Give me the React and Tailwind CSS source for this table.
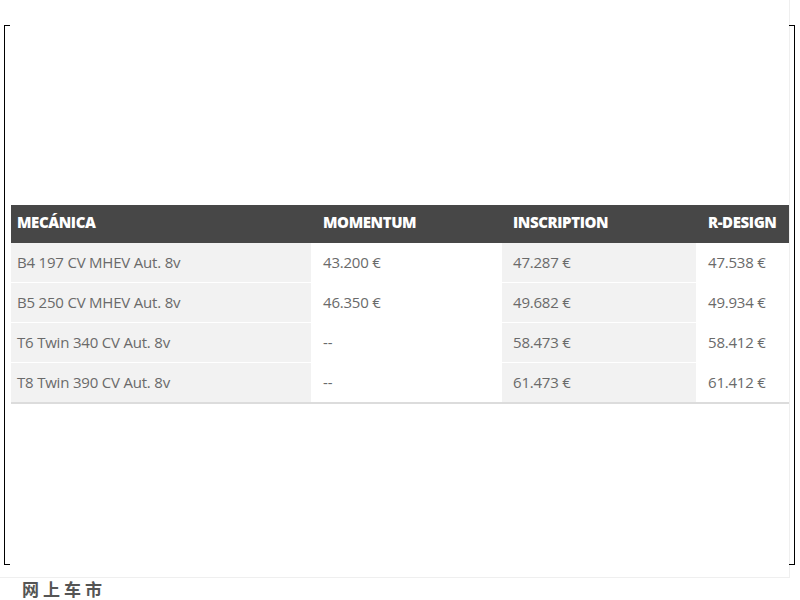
import React from 'react'

const rows = [
  ['B4 197 CV MHEV Aut. 8v', '43.200 €', '47.287 €', '47.538 €'],
  ['B5 250 CV MHEV Aut. 8v', '46.350 €', '49.682 €', '49.934 €'],
  ['T6 Twin 340 CV Aut. 8v', '--', '58.473 €', '58.412 €'],
  ['T8 Twin 390 CV Aut. 8v', '--', '61.473 €', '61.412 €'],
]

const heads = ['MECÁNICA', 'MOMENTUM', 'INSCRIPTION', 'R-DESIGN']
const pads = ['pl-[6px]', 'pl-[11px]', 'pl-[11px]', 'pl-[11px]']
const bgs = ['bg-[#f2f2f2]', 'bg-white', 'bg-[#f2f2f2]', 'bg-white']

function Bracket({ side }) {
  const left = side === 'left'
  return (
    <div
      className={`absolute top-[25px] h-[540px] w-[6px] border-y-[1.5px] border-black ${
        left ? 'left-[4px] border-l-[1.5px]' : 'left-[789px] border-r-[1.5px]'
      }`}
    />
  )
}

export default function App() {
  return (
    <div className="relative w-[800px] h-[600px] bg-white overflow-hidden flex flex-col font-['Open_Sans',sans-serif]">
      <div className="w-[790px] h-[578px] shrink-0 border-r border-b border-[#efefef] pt-[205px] pl-[11px]">
        <div className="w-[778px] border-b-2 border-[#dcdcdc]">
          <div className="grid grid-cols-[300px_189px_194px_92px] gap-x-px bg-[#474747] h-[38px] items-center pb-[3px]">
            {heads.map((h, i) => (
              <div key={h} className={`${pads[i]} text-white font-extrabold text-[15px] tracking-[-0.4px]`}>
                {h}
              </div>
            ))}
          </div>
          <div className="grid grid-cols-[300px_189px_194px_92px] gap-px bg-white">
            {rows.map((r) =>
              r.map((c, i) => (
                <div
                  key={r[0] + i}
                  className={`${bgs[i]} ${pads[i]} h-[39px] flex items-center text-[15px] text-[#6a6a6a] tracking-[-0.2px]`}
                >
                  {c}
                </div>
              ))
            )}
          </div>
        </div>
      </div>
      <div className="pl-[22px] pt-px text-[17px] leading-[20px] font-bold tracking-[4px] text-[#555] font-['Noto_Sans_CJK_SC',sans-serif]">
        网上车市
      </div>
      <Bracket side="left" />
      <Bracket side="right" />
    </div>
  )
}
